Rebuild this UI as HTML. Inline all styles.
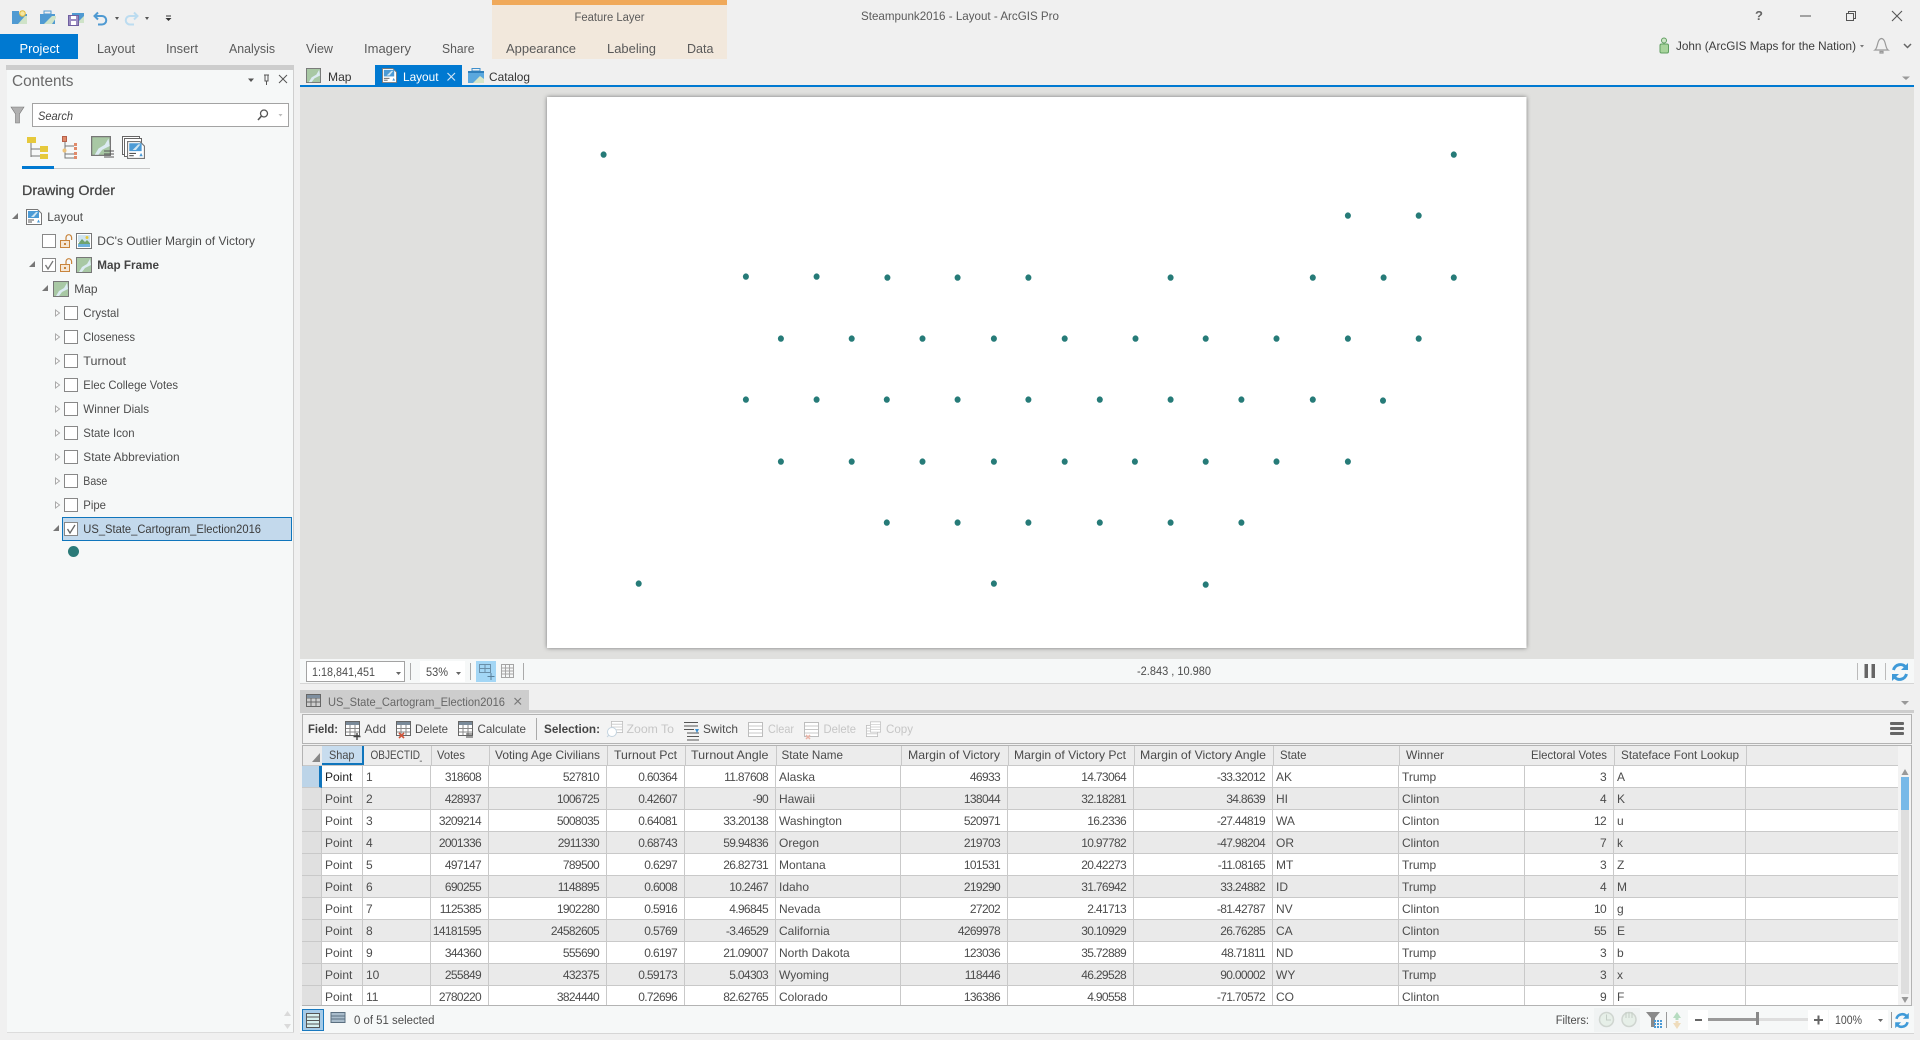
<!DOCTYPE html>
<html lang="en">
<head>
<meta charset="utf-8">
<title>Steampunk2016 - Layout - ArcGIS Pro</title>
<style>
html,body{margin:0;padding:0;width:1920px;height:1040px;overflow:hidden;background:#f0f0f0}
svg.base{position:absolute;left:0;top:0}
text{font-family:"Liberation Sans",sans-serif;font-size:12px;fill:#4c4c4c}
.r{font-size:12.6px;fill:#5a5a5a}
.c{fill:#c6c6c6}
.b{font-weight:bold;fill:#444}
.h{fill:#4a4a4a}
#rows{position:absolute;left:302px;top:766px;width:1596px;height:239px;overflow:hidden}
table{border-collapse:separate;border-spacing:0;table-layout:fixed;width:1596px;font-family:"Liberation Sans",sans-serif;font-size:12px;color:#4c4c4c}
td{height:19px;line-height:19px;padding:2px 0 0 3px;border-right:1px solid #c9c9c9;border-bottom:1px solid #c9c9c9;white-space:nowrap;overflow:hidden;box-sizing:content-box}
tr{background:#fff}
tr.e{background:#eaeaea}
td.s{background:#e0e0e0;padding:2px 0 0 0}
td.n{text-align:right;padding:2px 7px 0 0;letter-spacing:-.66px}
td.l{border-right:0}
tr.first td.s{background:#bcd4e8;border-right:3px solid #0f75bc;width:16px}
tr.first td.p{color:#222}
</style>
</head>
<body>
<svg class="base" width="1920" height="1040" viewBox="0 0 1920 1040" xmlns="http://www.w3.org/2000/svg">
<defs>
<clipPath id="oid"><rect x="366" y="746" width="56" height="19"/></clipPath>
<symbol id="map" viewBox="0 0 16 16"><rect x=".5" y=".5" width="15" height="15" fill="#a8c8a4" stroke="#777"/><path d="M14 2 L15 8 L9 11 L6 15 L3 15 L6 10 L11 7 Z" fill="#dcebf2"/></symbol>
<symbol id="layout" viewBox="0 0 16 16"><path d="M.5.5H11.5L15.5 4.5V15.5H.5Z" fill="#fff" stroke="#777"/><rect x="2" y="2" width="11" height="7" fill="#4c9bd6"/><path d="M5 8L10 3H12L8 8Z" fill="#cfe6f2"/><path d="M2 11H8M2 13H6" stroke="#555"/><path d="M11 13.5L12.5 10.5L14 13.5Z" fill="#4c9bd6"/></symbol>
<symbol id="lock" viewBox="0 0 14 14"><rect x=".5" y="6.5" width="9" height="7" fill="#f6e7d4" stroke="#c8843c"/><path d="M6 6V3.5A2.8 2.8 0 0 1 11.6 3.5V6" fill="none" stroke="#c8843c" stroke-width="1.2"/><rect x="4" y="9" width="2" height="2" fill="#c8843c"/></symbol>
<symbol id="img" viewBox="0 0 16 16"><rect x=".5" y=".5" width="15" height="15" fill="#fff" stroke="#777"/><rect x="2" y="2" width="12" height="7" fill="#cfe4f0"/><path d="M2 11L6 6L9 9L11 7L14 10V11Z" fill="#6fa36f"/><circle cx="11" cy="4.5" r="1.5" fill="#e8c83c"/><rect x="2" y="11" width="12" height="3" fill="#6db1dc"/></symbol>
<symbol id="tbl" viewBox="0 0 15 15"><rect x=".5" y=".5" width="14" height="14" fill="#fff" stroke="#666"/><rect x="1" y="1" width="13" height="3" fill="#7a8a99"/><path d="M1 7.5H14M1 11H14M5 4V14M10 4V14" stroke="#888"/></symbol>
<symbol id="sel" viewBox="0 0 15 15"><rect x=".5" y=".5" width="14" height="14" fill="#fff" stroke="#bdbdbd"/><path d="M1 4H14M1 7.5H14M1 11H14" stroke="#c8c8c8"/></symbol>
<symbol id="ref" viewBox="0 0 18 20"><path d="M2.5 8A7 7 0 0 1 15 5.5" fill="none" stroke="#3f9ad8" stroke-width="3"/><path d="M17 1V8H10Z" fill="#3f9ad8"/><path d="M15.5 12A7 7 0 0 1 3 14.5" fill="none" stroke="#3f9ad8" stroke-width="3"/><path d="M1 19V12H8Z" fill="#3f9ad8"/></symbol>
</defs>

<!-- ribbon contextual -->
<rect x="492" y="0" width="235" height="59" fill="#f2e8dc"/>
<rect x="492" y="0" width="235" height="5" fill="#f0a95a"/>
<rect x="0" y="34" width="78" height="25" fill="#0079d1"/>

<!-- QAT -->
<rect x="12" y="14" width="15" height="10" fill="#4f9ad2"/><rect x="12" y="11" width="7" height="3" fill="#4f9ad2"/><path d="M18 24L25 16H27V24Z" fill="#cfe3c8"/><circle cx="22.500" cy="13.500" r="2.800" fill="#f6e7a0" stroke="#e0b83c"/>
<rect x="40" y="14" width="15" height="10" fill="#4f9ad2"/><rect x="44" y="11" width="7" height="3" fill="none" stroke="#4f9ad2"/><path d="M44 24L52 16H56V18L52 24Z" fill="#cfe3c8"/>
<rect x="72" y="13" width="12" height="10" fill="#4f9ad2"/><path d="M77 23L84 16V23Z" fill="#cfe3c8"/><rect x="68.500" y="15.500" width="10" height="10" fill="#9a8bc0" stroke="#6f5fa0"/><rect x="71" y="16" width="5" height="3" fill="#fff"/><rect x="71" y="21" width="5" height="4" fill="#fff"/>
<path d="M98 12.500L94.500 16L98 19.500M95 16H102A4.200 4.200 0 0 1 102 24.500H98" fill="none" stroke="#4f9ad2" stroke-width="2"/>
<path d="M115 17L119 17L117 20Z" fill="#555"/>
<path d="M134 12.500L137.500 16L134 19.500M137 16H130A4.200 4.200 0 0 0 130 24.500H134" fill="none" stroke="#bcdcf0" stroke-width="2"/>
<path d="M145 17L149 17L147 20Z" fill="#555"/>
<path d="M166 16H171" stroke="#333"/><path d="M165.500 18H171.500L168.500 21Z" fill="#333"/>

<!-- ribbon text -->
<text class="r" x="19.500" y="53" textLength="40" lengthAdjust="spacingAndGlyphs" style="fill:#fff">Project</text>
<text class="r" x="97" y="53" textLength="38" lengthAdjust="spacingAndGlyphs">Layout</text>
<text class="r" x="166" y="53" textLength="32" lengthAdjust="spacingAndGlyphs">Insert</text>
<text class="r" x="229" y="53" textLength="46" lengthAdjust="spacingAndGlyphs">Analysis</text>
<text class="r" x="306" y="53" textLength="27" lengthAdjust="spacingAndGlyphs">View</text>
<text class="r" x="364" y="53" textLength="47" lengthAdjust="spacingAndGlyphs">Imagery</text>
<text class="r" x="442" y="53" textLength="32.500" lengthAdjust="spacingAndGlyphs">Share</text>
<text class="r" x="506" y="53" textLength="70" lengthAdjust="spacingAndGlyphs">Appearance</text>
<text class="r" x="607" y="53" textLength="49" lengthAdjust="spacingAndGlyphs">Labeling</text>
<text class="r" x="687" y="53" textLength="26.500" lengthAdjust="spacingAndGlyphs">Data</text>
<text x="574.500" y="21" textLength="70" lengthAdjust="spacingAndGlyphs" style="font-size:11.5px;fill:#5a5a5a">Feature Layer</text>
<text x="861" y="20" textLength="198" lengthAdjust="spacingAndGlyphs" style="fill:#5a5a5a">Steampunk2016 - Layout - ArcGIS Pro</text>

<!-- window controls -->
<text x="1755" y="20" style="font-size:13px;font-weight:bold;fill:#666">?</text>
<path d="M1800 16H1811" stroke="#555"/>
<path d="M1846.500 13.500H1853.500V20.500H1846.500ZM1848.500 13V11.500H1855.500V18.500H1854" fill="none" stroke="#555"/>
<path d="M1892 11L1902 21M1902 11L1892 21" stroke="#555" stroke-width="1.100"/>
<!-- user -->
<circle cx="1664" cy="40.500" r="2.500" fill="#cfe6c8" stroke="#5f9e5f"/><rect x="1660" y="44" width="8.500" height="9" rx="1.500" fill="#a8d49c" stroke="#5f9e5f"/>
<text x="1676" y="50" textLength="180" lengthAdjust="spacingAndGlyphs" style="fill:#3c3c3c">John (ArcGIS Maps for the Nation)</text>
<path d="M1860 45H1864L1862 47.500Z" fill="#777"/>
<path d="M1875 50H1888C1885 48 1886 39 1881.500 38.500C1877 39 1878 48 1875 50ZM1880 51.500H1883V53H1880Z" fill="none" stroke="#999" stroke-width="1.200"/>
<path d="M1904 44L1907.500 47.500L1911 44" fill="none" stroke="#666" stroke-width="1.500"/>

<!-- Contents pane -->
<rect x="7" y="65" width="287" height="968" fill="#f6f8f8"/>
<rect x="6" y="65" width="288" height="5" fill="#cdcdcd"/>
<rect x="293" y="70" width="1" height="963" fill="#cfcfcf"/>
<rect x="7" y="1032" width="287" height="1" fill="#dcdcdc"/>
<text x="12" y="86" textLength="61.500" lengthAdjust="spacingAndGlyphs" style="font-size:15.5px;fill:#6a6a6a">Contents</text>
<path d="M248 78.500H254L251 82Z" fill="#555"/>
<path d="M264 75H269M265 75V81H268V75M266.500 81V85" fill="none" stroke="#555"/>
<path d="M279 75L287 83M287 75L279 83" stroke="#555"/>
<path d="M11 107H24L19.500 114V123H15.500V114Z" fill="#b0b0b0" stroke="#777" stroke-width=".6"/>
<rect x="32.500" y="103.500" width="256" height="23" fill="#fff" stroke="#a3a3a3"/>
<text x="38" y="120" textLength="35" lengthAdjust="spacingAndGlyphs" style="font-style:italic;font-size:11.5px;fill:#444">Search</text>
<circle cx="264" cy="113.500" r="3.500" fill="none" stroke="#555" stroke-width="1.300"/><path d="M261.500 116L258 120" stroke="#555" stroke-width="1.600"/>
<path d="M278.500 114H282.500L280.500 116.500Z" fill="#bbb"/>

<!-- view icons -->
<rect x="27" y="137" width="9" height="6" fill="#e6c93c"/>
<path d="M31 143V157M31 149H40M31 156H40" stroke="#777" fill="none"/>
<rect x="40" y="146" width="8" height="6" fill="#e6c93c"/><rect x="40" y="154" width="8" height="5" fill="#e6c93c"/>
<rect x="62.500" y="136.500" width="4" height="5" fill="#e08a6a" stroke="#b5604a"/>
<path d="M65 142V146H74M65 146V154H74M65 154V158H74" stroke="#777" fill="none"/>
<rect x="74" y="143" width="3" height="3" fill="#e08a6a"/><rect x="74" y="147" width="3" height="3" fill="#e08a6a"/><circle cx="64.500" cy="150.500" r="2" fill="#ecc27a"/><rect x="74" y="152" width="3" height="3" fill="#e08a6a"/><rect x="74" y="156" width="3" height="3" fill="#e08a6a"/>
<use href="#map" x="91" y="136" width="20" height="20"/>
<path d="M104 151H114M104 154H114M104 157H114" stroke="#555"/>
<rect x="122.500" y="136.500" width="17" height="18" fill="#fff" stroke="#666"/>
<rect x="124.500" y="138.500" width="17" height="18" fill="#fff" stroke="#666"/>
<use href="#layout" x="127" y="140" width="18" height="20"/>

<rect x="22" y="168" width="128" height="1" fill="#c8c8c8"/>
<rect x="22" y="166" width="32" height="3" fill="#0079d1"/>
<text x="22" y="195" textLength="93" lengthAdjust="spacingAndGlyphs" style="font-size:14px;fill:#444;stroke:#444;stroke-width:.25px">Drawing Order</text>

<!-- tree -->
<path d="M18 213V219H12Z" fill="#777"/>
<use href="#layout" x="26" y="209" width="16" height="16"/>
<text x="47.300" y="221" textLength="35.700" lengthAdjust="spacingAndGlyphs">Layout</text>

<rect x="42.500" y="234.500" width="13" height="13" fill="#fff" stroke="#888"/>
<use href="#lock" x="60" y="234" width="14" height="14"/>
<use href="#img" x="76" y="233" width="16" height="16"/>
<text x="97.300" y="245" textLength="157.700" lengthAdjust="spacingAndGlyphs">DC's Outlier Margin of Victory</text>

<path d="M35 261V267H29Z" fill="#777"/>
<rect x="42.500" y="258.500" width="13" height="13" fill="#fff" stroke="#888"/>
<path d="M45.500 265L48 269L53 261" fill="none" stroke="#777" stroke-width="1.300"/>
<use href="#lock" x="60" y="258" width="14" height="14"/>
<use href="#map" x="76" y="257" width="16" height="16"/>
<text class="b" x="97.300" y="269" textLength="61.700" lengthAdjust="spacingAndGlyphs">Map Frame</text>

<path d="M48 285V291H42Z" fill="#777"/>
<use href="#map" x="53" y="281" width="16" height="16"/>
<text x="74.300" y="293" textLength="23.300" lengthAdjust="spacingAndGlyphs">Map</text>

<g fill="#fff" stroke="#aaa">
<path d="M55.500 310V316L59.500 313Z"/><path d="M55.500 334V340L59.500 337Z"/><path d="M55.500 358V364L59.500 361Z"/><path d="M55.500 382V388L59.500 385Z"/><path d="M55.500 406V412L59.500 409Z"/><path d="M55.500 430V436L59.500 433Z"/><path d="M55.500 454V460L59.500 457Z"/><path d="M55.500 478V484L59.500 481Z"/><path d="M55.500 502V508L59.500 505Z"/>
</g>
<g fill="#fff" stroke="#888">
<rect x="64.500" y="306.500" width="13" height="13"/><rect x="64.500" y="330.500" width="13" height="13"/><rect x="64.500" y="354.500" width="13" height="13"/><rect x="64.500" y="378.500" width="13" height="13"/><rect x="64.500" y="402.500" width="13" height="13"/><rect x="64.500" y="426.500" width="13" height="13"/><rect x="64.500" y="450.500" width="13" height="13"/><rect x="64.500" y="474.500" width="13" height="13"/><rect x="64.500" y="498.500" width="13" height="13"/>
</g>
<text x="83.300" y="317" textLength="35.700" lengthAdjust="spacingAndGlyphs">Crystal</text>
<text x="83.300" y="341" textLength="51.700" lengthAdjust="spacingAndGlyphs">Closeness</text>
<text x="83.300" y="365" textLength="42.700" lengthAdjust="spacingAndGlyphs">Turnout</text>
<text x="83.300" y="389" textLength="94.700" lengthAdjust="spacingAndGlyphs">Elec College Votes</text>
<text x="83.300" y="413" textLength="65.700" lengthAdjust="spacingAndGlyphs">Winner Dials</text>
<text x="83.300" y="437" textLength="51.300" lengthAdjust="spacingAndGlyphs">State Icon</text>
<text x="83.300" y="461" textLength="96.300" lengthAdjust="spacingAndGlyphs">State Abbreviation</text>
<text x="83.300" y="485" textLength="24" lengthAdjust="spacingAndGlyphs">Base</text>
<text x="83.300" y="509" textLength="22.700" lengthAdjust="spacingAndGlyphs">Pipe</text>

<rect x="62.500" y="517.500" width="229" height="23" fill="#c3d9ec" stroke="#0f75bc"/>
<path d="M59 525V531H53Z" fill="#777"/>
<rect x="64.500" y="522.500" width="13" height="13" fill="#fff" stroke="#888"/>
<path d="M67.500 529L70 533L75 525" fill="none" stroke="#666" stroke-width="1.300"/>
<text x="83.300" y="533" textLength="177.700" lengthAdjust="spacingAndGlyphs" style="fill:#3c3c3c">US_State_Cartogram_Election2016</text>
<circle cx="73.500" cy="551.500" r="5.500" fill="#2b7a78"/>

<path d="M284 1016L287.500 1011L291 1016Z" fill="#dadada"/><path d="M284 1024L287.500 1029L291 1024Z" fill="#dadada"/>

<!-- doc tabs -->
<rect x="375" y="65" width="87" height="20" fill="#0079d1"/>
<rect x="300" y="85" width="1614" height="2" fill="#0079d1"/>
<use href="#map" x="306" y="68" width="15" height="15"/>
<text x="328" y="81" textLength="23.500" lengthAdjust="spacingAndGlyphs" style="fill:#333">Map</text>
<use href="#layout" x="382" y="68" width="15" height="15"/>
<text x="403" y="81" textLength="35.500" lengthAdjust="spacingAndGlyphs" style="fill:#fff">Layout</text>
<path d="M447.500 73L455 80.500M455 73L447.500 80.500" stroke="#cfe4f5" stroke-width="1.200"/>
<rect x="468" y="71" width="16" height="12" fill="#5aa8de"/><rect x="472" y="68.500" width="8" height="2.500" fill="none" stroke="#3f8fcb"/><path d="M473 83L480 76L484 79V83Z" fill="#d6e6c8"/><rect x="468" y="71" width="16" height="2" fill="#2f7fbb"/>
<text x="489" y="81" textLength="41" lengthAdjust="spacingAndGlyphs" style="fill:#333">Catalog</text>
<path d="M1902 76.500H1910L1906 80Z" fill="#999"/>

<!-- map view -->
<rect x="300" y="87" width="1614" height="572" fill="#e0e0de"/>
<rect x="547" y="97" width="979.500" height="551" fill="#fff" style="filter:drop-shadow(0 0 2px #777)"/>
<g fill="#267b78" transform="translate(.5 .3)">
<ellipse cx="603.100" cy="154.300" rx="3" ry="3.200"/><ellipse cx="1453.300" cy="154.300" rx="3" ry="3.200"/>
<ellipse cx="1347.400" cy="215.300" rx="3" ry="3.200"/><ellipse cx="1418.200" cy="215.300" rx="3" ry="3.200"/>
<ellipse cx="745.400" cy="276.300" rx="3" ry="3.200"/><ellipse cx="816.100" cy="276.300" rx="3" ry="3.200"/><ellipse cx="886.900" cy="277.300" rx="3" ry="3.200"/><ellipse cx="957.100" cy="277.300" rx="3" ry="3.200"/><ellipse cx="1027.900" cy="277.300" rx="3" ry="3.200"/><ellipse cx="1170.100" cy="277.300" rx="3" ry="3.200"/><ellipse cx="1312.300" cy="277.300" rx="3" ry="3.200"/><ellipse cx="1383.100" cy="277.300" rx="3" ry="3.200"/><ellipse cx="1453.300" cy="277.300" rx="3" ry="3.200"/>
<ellipse cx="780.400" cy="338.300" rx="3" ry="3.200"/><ellipse cx="851.200" cy="338.300" rx="3" ry="3.200"/><ellipse cx="922" cy="338.300" rx="3" ry="3.200"/><ellipse cx="993.400" cy="338.300" rx="3" ry="3.200"/><ellipse cx="1064.200" cy="338.300" rx="3" ry="3.200"/><ellipse cx="1135" cy="338.300" rx="3" ry="3.200"/><ellipse cx="1205.200" cy="338.300" rx="3" ry="3.200"/><ellipse cx="1276" cy="338.300" rx="3" ry="3.200"/><ellipse cx="1347.400" cy="338.300" rx="3" ry="3.200"/><ellipse cx="1418.200" cy="338.300" rx="3" ry="3.200"/>
<ellipse cx="745.400" cy="399.300" rx="3" ry="3.200"/><ellipse cx="816.100" cy="399.300" rx="3" ry="3.200"/><ellipse cx="886.300" cy="399.300" rx="3" ry="3.200"/><ellipse cx="957.100" cy="399.300" rx="3" ry="3.200"/><ellipse cx="1027.900" cy="399.300" rx="3" ry="3.200"/><ellipse cx="1099.300" cy="399.300" rx="3" ry="3.200"/><ellipse cx="1170.100" cy="399.300" rx="3" ry="3.200"/><ellipse cx="1240.900" cy="399.300" rx="3" ry="3.200"/><ellipse cx="1312.300" cy="399.300" rx="3" ry="3.200"/><ellipse cx="1382.500" cy="400.300" rx="3" ry="3.200"/>
<ellipse cx="780.400" cy="461.300" rx="3" ry="3.200"/><ellipse cx="851.200" cy="461.300" rx="3" ry="3.200"/><ellipse cx="922" cy="461.300" rx="3" ry="3.200"/><ellipse cx="993.400" cy="461.300" rx="3" ry="3.200"/><ellipse cx="1064.200" cy="461.300" rx="3" ry="3.200"/><ellipse cx="1134.400" cy="461.300" rx="3" ry="3.200"/><ellipse cx="1205.200" cy="461.300" rx="3" ry="3.200"/><ellipse cx="1276" cy="461.300" rx="3" ry="3.200"/><ellipse cx="1347.400" cy="461.300" rx="3" ry="3.200"/>
<ellipse cx="886.300" cy="522.300" rx="3" ry="3.200"/><ellipse cx="957.100" cy="522.300" rx="3" ry="3.200"/><ellipse cx="1027.900" cy="522.300" rx="3" ry="3.200"/><ellipse cx="1099.300" cy="522.300" rx="3" ry="3.200"/><ellipse cx="1170.100" cy="522.300" rx="3" ry="3.200"/><ellipse cx="1240.900" cy="522.300" rx="3" ry="3.200"/>
<ellipse cx="638.200" cy="583.300" rx="3" ry="3.200"/><ellipse cx="993.400" cy="583.300" rx="3" ry="3.200"/><ellipse cx="1205.200" cy="584.300" rx="3" ry="3.200"/>
</g>

<!-- map status bar -->
<rect x="300" y="659" width="1614" height="24" fill="#f6f8f8"/>
<rect x="300" y="683" width="1614" height="1" fill="#d6d6d6"/>
<rect x="306.500" y="661.500" width="98" height="20" fill="#fff" stroke="#a3a3a3"/>
<text x="312" y="676" textLength="63" lengthAdjust="spacingAndGlyphs" style="font-size:11.5px">1:18,841,451</text>
<path d="M396 672H401L398.500 675Z" fill="#666"/>
<rect x="410" y="663" width="1" height="17" fill="#aaa"/>
<rect x="420" y="661" width="45" height="21" fill="#fff"/>
<text x="426" y="676" textLength="22" lengthAdjust="spacingAndGlyphs" style="font-size:11.5px">53%</text>
<path d="M456 672H461L458.500 675Z" fill="#666"/>
<rect x="470" y="663" width="1" height="17" fill="#aaa"/>
<rect x="476" y="661" width="20" height="21" fill="#a3d6f5"/>
<path d="M479.500 664.500H490.500V672.500H479.500ZM485 664.500V672.500M479.500 668.500H490.500" fill="none" stroke="#6a8fa9"/><path d="M491 673V680M487.500 676.500H494.500" stroke="#5a7f99"/>
<path d="M501.500 664.500H513.500V677.500H501.500ZM501.500 668H513.500M501.500 671H513.500M501.500 674H513.500M505.500 664.500V677.500M509.500 664.500V677.500" fill="none" stroke="#a5a5a5"/>
<rect x="523" y="663" width="1" height="17" fill="#aaa"/>
<text x="1137" y="675" textLength="74" lengthAdjust="spacingAndGlyphs" style="font-size:11.5px">-2.843 , 10.980</text>
<rect x="1857" y="663" width="1" height="17" fill="#bbb"/>
<rect x="1864.500" y="664" width="3.500" height="14" fill="#666"/><rect x="1871.500" y="664" width="3.500" height="14" fill="#666"/>
<rect x="1885" y="663" width="1" height="17" fill="#bbb"/>
<use href="#ref" x="1891" y="662" width="18" height="20"/>

<!-- attribute table tab -->
<rect x="300" y="690" width="229" height="20" fill="#cdcdcd"/>
<rect x="300" y="710" width="1614" height="3" fill="#cdcdcd"/>
<path d="M306.500 694.500H320.500V706.500H306.500ZM306.500 698H320.500M306.500 702H320.500M311 694.500V706.500M316 694.500V706.500" fill="none" stroke="#666"/>
<rect x="307" y="695" width="13" height="3" fill="#7f8f9f"/>
<text x="328" y="706" textLength="177" lengthAdjust="spacingAndGlyphs" style="fill:#666">US_State_Cartogram_Election2016</text>
<path d="M514.500 698L521 704.500M521 698L514.500 704.500" stroke="#777" stroke-width="1.200"/>
<path d="M1901 701H1909L1905 705Z" fill="#999"/>

<!-- table toolbar -->
<rect x="302.500" y="714.500" width="1609" height="29" fill="#f3f3f3" stroke="#b3b3b3"/>
<text class="b" x="308" y="733" textLength="30" lengthAdjust="spacingAndGlyphs">Field:</text>
<use href="#tbl" x="345" y="721" width="15" height="15"/><path d="M357 733V740M353.500 736.500H360.500" stroke="#444" stroke-width="1.400"/>
<text x="364.500" y="733" textLength="21.500" lengthAdjust="spacingAndGlyphs">Add</text>
<use href="#tbl" x="396" y="721" width="15" height="15"/><path d="M399 733L404 738M404 733L399 738" stroke="#d0553a" stroke-width="1.600"/>
<text x="415" y="733" textLength="33" lengthAdjust="spacingAndGlyphs">Delete</text>
<use href="#tbl" x="458" y="721" width="15" height="15"/><path d="M466 734H473M466 737H473" stroke="#444"/>
<text x="477.500" y="733" textLength="48.500" lengthAdjust="spacingAndGlyphs">Calculate</text>
<rect x="536" y="718" width="1" height="22" fill="#aaa"/>
<text class="b" x="544" y="733" textLength="56" lengthAdjust="spacingAndGlyphs">Selection:</text>
<use href="#sel" x="611" y="721" width="12" height="12"/><circle cx="612" cy="732" r="4.500" fill="#fff" stroke="#c4d4e0"/><path d="M607 737L609 735" stroke="#c4d4e0"/>
<text class="c" x="626.500" y="733" textLength="47.500" lengthAdjust="spacingAndGlyphs">Zoom To</text>
<path d="M684 722.500H698M684 726H698M684 729.500H694M687 733H699M687 736.500H699M687 740H699" stroke="#555"/><path d="M695 729L697 733L699 729Z" fill="#3b8fd0"/>
<text x="703" y="733" textLength="35" lengthAdjust="spacingAndGlyphs">Switch</text>
<use href="#sel" x="748" y="722" width="15" height="15"/>
<text class="c" x="768" y="733" textLength="26" lengthAdjust="spacingAndGlyphs">Clear</text>
<use href="#sel" x="804" y="722" width="15" height="15"/><path d="M806 735L810 739M810 735L806 739" stroke="#eab3a6" stroke-width="1.500"/>
<text class="c" x="823.500" y="733" textLength="32.500" lengthAdjust="spacingAndGlyphs">Delete</text>
<use href="#sel" x="866" y="725" width="12" height="12"/><use href="#sel" x="870" y="721" width="11" height="12"/>
<text class="c" x="886" y="733" textLength="27" lengthAdjust="spacingAndGlyphs">Copy</text>
<rect x="1890" y="722" width="14" height="3" rx="1" fill="#666"/><rect x="1890" y="727" width="14" height="3" rx="1" fill="#666"/><rect x="1890" y="732" width="14" height="3" rx="1" fill="#666"/>

<!-- table frame and header -->
<rect x="302.500" y="745.500" width="1609" height="260" fill="#f3f3f3" stroke="#b3b3b3"/>
<rect x="303" y="746" width="1595" height="19" fill="#ececec"/>
<rect x="322" y="746" width="41" height="19" fill="#c7dcee"/>
<rect x="322" y="763" width="41" height="2" fill="#0f75bc"/><rect x="362" y="746" width="2" height="19" fill="#0f75bc"/>
<path d="M320 753V762H312Z" fill="#888"/>
<g fill="#c9c9c9">
<rect x="431" y="746" width="1" height="19"/><rect x="489" y="746" width="1" height="19"/><rect x="607" y="746" width="1" height="19"/><rect x="685" y="746" width="1" height="19"/><rect x="776" y="746" width="1" height="19"/><rect x="901" y="746" width="1" height="19"/><rect x="1008" y="746" width="1" height="19"/><rect x="1134" y="746" width="1" height="19"/><rect x="1273" y="746" width="1" height="19"/><rect x="1399" y="746" width="1" height="19"/><rect x="1614" y="746" width="1" height="19"/><rect x="1746" y="746" width="1" height="19"/>
<rect x="303" y="765" width="1595" height="1"/>
</g>
<g class="hd">
<text class="h" x="329" y="759" textLength="25.500" lengthAdjust="spacingAndGlyphs">Shap</text>
<text class="h" x="370.500" y="759" textLength="55" lengthAdjust="spacingAndGlyphs" clip-path="url(#oid)">OBJECTID_</text>
<text class="h" x="437" y="759" textLength="28" lengthAdjust="spacingAndGlyphs">Votes</text>
<text class="h" x="495" y="759" textLength="105" lengthAdjust="spacingAndGlyphs">Voting Age Civilians</text>
<text class="h" x="614" y="759" textLength="63" lengthAdjust="spacingAndGlyphs">Turnout Pct</text>
<text class="h" x="691" y="759" textLength="77.500" lengthAdjust="spacingAndGlyphs">Turnout Angle</text>
<text class="h" x="781.500" y="759" textLength="61.500" lengthAdjust="spacingAndGlyphs">State Name</text>
<text class="h" x="908" y="759" textLength="92" lengthAdjust="spacingAndGlyphs">Margin of Victory</text>
<text class="h" x="1014" y="759" textLength="112" lengthAdjust="spacingAndGlyphs">Margin of Victory Pct</text>
<text class="h" x="1140" y="759" textLength="126" lengthAdjust="spacingAndGlyphs">Margin of Victory Angle</text>
<text class="h" x="1280" y="759" textLength="26.500" lengthAdjust="spacingAndGlyphs">State</text>
<text class="h" x="1406" y="759" textLength="38" lengthAdjust="spacingAndGlyphs">Winner</text>
<text class="h" x="1531" y="759" textLength="76" lengthAdjust="spacingAndGlyphs">Electoral Votes</text>
<text class="h" x="1621" y="759" textLength="118" lengthAdjust="spacingAndGlyphs">Stateface Font Lookup</text>
</g>

<!-- scrollbar -->
<rect x="1901" y="777" width="8" height="217" fill="#dedede"/>
<rect x="1901" y="777" width="8" height="33" fill="#78b9e8"/>
<path d="M1901.500 775L1905 769L1908.500 775Z" fill="#999"/>
<path d="M1901.500 997H1908.500L1905 1003Z" fill="#999"/>

<!-- table status bar -->
<rect x="300" y="1006" width="1614" height="27" fill="#f6f8f8"/>
<rect x="300" y="1033" width="1614" height="1" fill="#d6d6d6"/>
<rect x="302.500" y="1009.500" width="21" height="21" fill="#a5cbe8" stroke="#1979bf"/>
<path d="M306.500 1013.500H319.500V1027.500H306.500Z" fill="#d6f0ee" stroke="#555"/><path d="M306.500 1017H319.500M306.500 1020.500H319.500M306.500 1024H319.500" stroke="#555"/>
<path d="M331 1012.500H345V1022.500H331Z" fill="#a9bccb" stroke="#5b6f80"/><path d="M331 1016H345M331 1019H345" stroke="#5b6f80"/>
<text x="354" y="1024" textLength="80.500" lengthAdjust="spacingAndGlyphs" style="font-size:11.5px">0 of 51 selected</text>
<text x="1555.700" y="1024" textLength="33.300" lengthAdjust="spacingAndGlyphs" style="font-size:11.5px">Filters:</text>
<rect x="1594" y="1008" width="46" height="24" fill="#f0f3f3"/>
<circle cx="1606.500" cy="1019.500" r="7" fill="#e6efe8" stroke="#cfd5d0" stroke-width="1.500"/><path d="M1606.500 1014.500V1020H1611" fill="none" stroke="#c4cec6"/>
<circle cx="1629" cy="1019.500" r="7" fill="#e6efe8" stroke="#cfd5d0" stroke-width="1.500"/><path d="M1626 1012V1018M1629 1012V1018M1632 1012V1018" stroke="#c4cec6"/>
<path d="M1646 1012H1660L1655 1018V1027H1651V1018Z" fill="#8a8a8a"/>
<g fill="#4b9ad6"><rect x="1654" y="1020" width="2" height="2"/><rect x="1657" y="1020" width="2" height="2"/><rect x="1660" y="1020" width="2" height="2"/><rect x="1654" y="1023" width="2" height="2"/><rect x="1657" y="1023" width="2" height="2"/><rect x="1660" y="1023" width="2" height="2"/><rect x="1654" y="1026" width="2" height="2"/><rect x="1657" y="1026" width="2" height="2"/><rect x="1660" y="1026" width="2" height="2"/></g>
<rect x="1666" y="1012" width="1" height="16" fill="#999"/>
<path d="M1673 1018L1677 1012L1681 1018H1678.500V1020H1675.500V1018Z" fill="#b6dcc0"/><path d="M1673 1023L1677 1029L1681 1023H1678.500V1021H1675.500V1023Z" fill="#efdcbc"/>
<rect x="1688" y="1010" width="20" height="20" fill="#fff"/>
<rect x="1695" y="1019" width="7" height="2" fill="#666"/>
<rect x="1708" y="1018" width="100" height="3" fill="#dedede"/>
<rect x="1708" y="1018" width="49" height="3" fill="#999"/>
<rect x="1756" y="1012" width="3" height="13" fill="#888"/>
<rect x="1808" y="1010" width="20" height="20" fill="#fff"/>
<path d="M1814 1020H1823M1818.500 1015.500V1024.500" stroke="#666" stroke-width="2"/>
<rect x="1829" y="1010" width="59" height="20" fill="#fff"/>
<text x="1835" y="1024" textLength="27" lengthAdjust="spacingAndGlyphs" style="font-size:11.5px">100%</text>
<path d="M1878 1019H1883L1880.500 1022Z" fill="#666"/>
<rect x="1891" y="1012" width="1" height="16" fill="#999"/>
<use href="#ref" x="1894" y="1012" width="16" height="17"/>
</svg>

<div id="rows">
<table>
<colgroup><col style="width:20px"><col style="width:41px"><col style="width:68px"><col style="width:58px"><col style="width:118px"><col style="width:78px"><col style="width:91px"><col style="width:125px"><col style="width:107px"><col style="width:126px"><col style="width:139px"><col style="width:126px"><col style="width:126px"><col style="width:89px"><col style="width:132px"><col style="width:152px"></colgroup>
<tr class="first"><td class="s"></td><td class="p">Point</td><td>1</td><td class="n">318608</td><td class="n">527810</td><td class="n">0.60364</td><td class="n">11.87608</td><td>Alaska</td><td class="n">46933</td><td class="n">14.73064</td><td class="n">-33.32012</td><td>AK</td><td>Trump</td><td class="n">3</td><td>A</td><td class="l"></td></tr>
<tr class="e"><td class="s"></td><td>Point</td><td>2</td><td class="n">428937</td><td class="n">1006725</td><td class="n">0.42607</td><td class="n">-90</td><td>Hawaii</td><td class="n">138044</td><td class="n">32.18281</td><td class="n">34.8639</td><td>HI</td><td>Clinton</td><td class="n">4</td><td>K</td><td class="l"></td></tr>
<tr><td class="s"></td><td>Point</td><td>3</td><td class="n">3209214</td><td class="n">5008035</td><td class="n">0.64081</td><td class="n">33.20138</td><td>Washington</td><td class="n">520971</td><td class="n">16.2336</td><td class="n">-27.44819</td><td>WA</td><td>Clinton</td><td class="n">12</td><td>u</td><td class="l"></td></tr>
<tr class="e"><td class="s"></td><td>Point</td><td>4</td><td class="n">2001336</td><td class="n">2911330</td><td class="n">0.68743</td><td class="n">59.94836</td><td>Oregon</td><td class="n">219703</td><td class="n">10.97782</td><td class="n">-47.98204</td><td>OR</td><td>Clinton</td><td class="n">7</td><td>k</td><td class="l"></td></tr>
<tr><td class="s"></td><td>Point</td><td>5</td><td class="n">497147</td><td class="n">789500</td><td class="n">0.6297</td><td class="n">26.82731</td><td>Montana</td><td class="n">101531</td><td class="n">20.42273</td><td class="n">-11.08165</td><td>MT</td><td>Trump</td><td class="n">3</td><td>Z</td><td class="l"></td></tr>
<tr class="e"><td class="s"></td><td>Point</td><td>6</td><td class="n">690255</td><td class="n">1148895</td><td class="n">0.6008</td><td class="n">10.2467</td><td>Idaho</td><td class="n">219290</td><td class="n">31.76942</td><td class="n">33.24882</td><td>ID</td><td>Trump</td><td class="n">4</td><td>M</td><td class="l"></td></tr>
<tr><td class="s"></td><td>Point</td><td>7</td><td class="n">1125385</td><td class="n">1902280</td><td class="n">0.5916</td><td class="n">4.96845</td><td>Nevada</td><td class="n">27202</td><td class="n">2.41713</td><td class="n">-81.42787</td><td>NV</td><td>Clinton</td><td class="n">10</td><td>g</td><td class="l"></td></tr>
<tr class="e"><td class="s"></td><td>Point</td><td>8</td><td class="n">14181595</td><td class="n">24582605</td><td class="n">0.5769</td><td class="n">-3.46529</td><td>California</td><td class="n">4269978</td><td class="n">30.10929</td><td class="n">26.76285</td><td>CA</td><td>Clinton</td><td class="n">55</td><td>E</td><td class="l"></td></tr>
<tr><td class="s"></td><td>Point</td><td>9</td><td class="n">344360</td><td class="n">555690</td><td class="n">0.6197</td><td class="n">21.09007</td><td>North Dakota</td><td class="n">123036</td><td class="n">35.72889</td><td class="n">48.71811</td><td>ND</td><td>Trump</td><td class="n">3</td><td>b</td><td class="l"></td></tr>
<tr class="e"><td class="s"></td><td>Point</td><td>10</td><td class="n">255849</td><td class="n">432375</td><td class="n">0.59173</td><td class="n">5.04303</td><td>Wyoming</td><td class="n">118446</td><td class="n">46.29528</td><td class="n">90.00002</td><td>WY</td><td>Trump</td><td class="n">3</td><td>x</td><td class="l"></td></tr>
<tr><td class="s"></td><td>Point</td><td>11</td><td class="n">2780220</td><td class="n">3824440</td><td class="n">0.72696</td><td class="n">82.62765</td><td>Colorado</td><td class="n">136386</td><td class="n">4.90558</td><td class="n">-71.70572</td><td>CO</td><td>Clinton</td><td class="n">9</td><td>F</td><td class="l"></td></tr>
</table>
</div>
</body>
</html>
